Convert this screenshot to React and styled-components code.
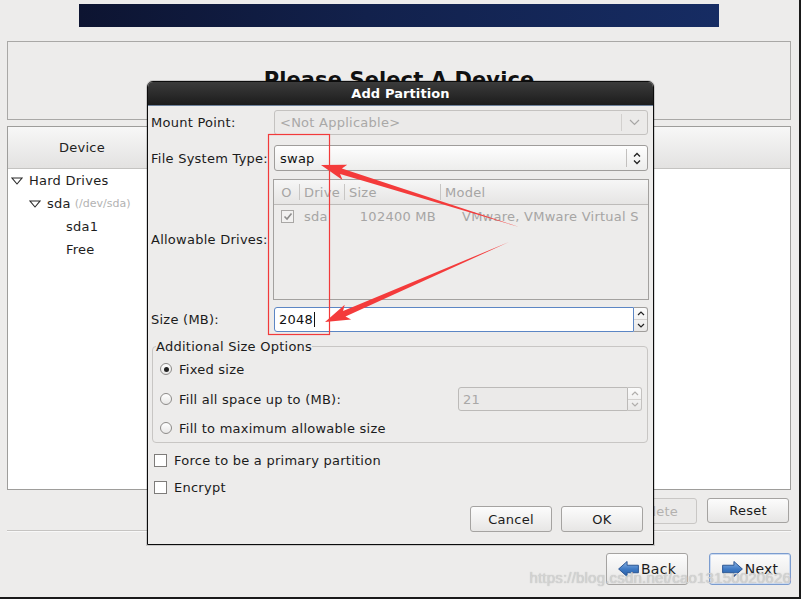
import React from "react";
import styled, { createGlobalStyle } from "styled-components";

const GlobalStyle = createGlobalStyle`
  html, body {
    margin: 0;
    padding: 0;
    background: #edeceb;
  }
  body {
    font-family: "DejaVu Sans", "Liberation Sans", sans-serif;
    font-size: 13px;
    letter-spacing: 0.25px;
    color: #1b1b1b;
  }
  * {
    box-sizing: border-box;
  }
`;

// ---------- background installer screen ----------

const Screen = styled.div`
  position: relative;
  width: 801px;
  height: 599px;
  overflow: hidden;
  background: #edeceb;
  border-right: 2px solid #1a1a1a;
  border-bottom: 2px solid #1a1a1a;
  padding: 4px 8px 0 7px;
  display: flex;
  flex-direction: column;
`;

const Banner = styled.div`
  margin-left: 72px;
  width: 640px;
  height: 23px;
  background: linear-gradient(90deg, #0d1431 0%, #12214c 45%, #162c63 100%);
`;

const HeaderPanel = styled.div`
  margin-top: 14px;
  height: 79px;
  border: 1px solid #a9a8a6;
  display: flex;
  align-items: center;
  justify-content: center;
  padding-bottom: 2px;
`;

const PageTitle = styled.h1`
  margin: 0;
  font-size: 21px;
  font-weight: 700;
  letter-spacing: 0.1px;
  color: #111;
`;

const DevicePanel = styled.div`
  margin-top: 6px;
  height: 364px;
  border: 1px solid #9e9d9b;
  background: #fff;
  display: flex;
  flex-direction: column;
`;

const ColumnHeader = styled.div`
  height: 42px;
  flex: none;
  display: flex;
  background: linear-gradient(#f7f7f7, #e3e2e1);
  border-bottom: 1px solid #c4c3c1;
`;

const ColumnTitle = styled.div`
  width: 148px;
  display: flex;
  align-items: center;
  justify-content: center;
  color: #222;
`;

const TreeList = styled.div`
  display: flex;
  flex-direction: column;
`;

const TreeRow = styled.div`
  height: 23px;
  display: flex;
  align-items: center;
  gap: 6px;
  padding-left: ${(p) => p.$indent}px;
  color: #1d1d1d;
`;

const TreeNote = styled.span`
  font-size: 11px;
  letter-spacing: 0;
  color: #b2b2b2;
  margin-left: -2px;
`;

const ActionRow = styled.div`
  margin-top: 8px;
  height: 25px;
  display: flex;
  justify-content: flex-end;
  gap: 10px;
  padding-right: 2px;
`;

const Separator = styled.div`
  margin-top: 7px;
  height: 2px;
  border-top: 1px solid #c6c4c2;
  border-bottom: 1px solid #f8f8f8;
`;

const NavRow = styled.div`
  margin-top: 21px;
  height: 32px;
  display: flex;
  justify-content: flex-end;
  gap: 21px;
`;

const Button = styled.button`
  width: 82px;
  height: ${(p) => p.$h || 26}px;
  padding: 0;
  display: flex;
  align-items: center;
  justify-content: center;
  gap: 2px;
  font-family: inherit;
  letter-spacing: inherit;
  font-size: ${(p) => p.$size || 13}px;
  color: ${(p) => (p.disabled ? "#b3b1af" : "#1b1b1b")};
  background: ${(p) =>
    p.disabled ? "#ebeae9" : "linear-gradient(#fcfcfc, #e7e6e5)"};
  border: 1px solid
    ${(p) => (p.$focus ? "#7b9ccf" : p.disabled ? "#c9c7c5" : "#a5a3a1")};
  box-shadow: ${(p) => (p.$focus ? "inset 0 0 0 1px #cddbf0" : "none")};
  border-radius: 3px;
`;

// ---------- dialog ----------

const Dialog = styled.div`
  position: absolute;
  left: 147px;
  top: 81px;
  width: 507px;
  height: 464px;
  display: flex;
  flex-direction: column;
  border: 1px solid #0c0c0c;
  border-radius: 6px 6px 0 0;
  background: #edeceb;
  overflow: hidden;
  box-shadow: 0 0 0 1px rgba(0, 0, 0, 0.15);
`;

const TitleBar = styled.div`
  height: 24px;
  flex: none;
  display: flex;
  align-items: center;
  justify-content: center;
  background: linear-gradient(#3b3b3b, #1c1c1c);
  border-bottom: 1px solid #6d819b;
  color: #fff;
  font-weight: 700;
  font-size: 13px;
  letter-spacing: 0.1px;
`;

const DialogBody = styled.div`
  flex: 1;
  display: flex;
  flex-direction: column;
  padding: 4px 5px 0 3px;
`;

const FormRow = styled.div`
  display: grid;
  grid-template-columns: 123px 1fr;
  align-items: center;
  margin-top: ${(p) => p.$mt || 0}px;
`;

const Label = styled.span`
  color: #1b1b1b;
`;

const Combo = styled.div`
  height: ${(p) => p.$h}px;
  display: flex;
  align-items: center;
  border: 1px solid ${(p) => (p.$disabled ? "#c4c2c0" : "#9f9d9b")};
  border-radius: 3px;
  background: ${(p) =>
    p.$disabled ? "#ebeae9" : "linear-gradient(#fefefe, #ededec)"};
  color: ${(p) => (p.$disabled ? "#a9a8a7" : "#111")};
`;

const ComboText = styled.span`
  flex: 1;
  padding-left: 5px;
`;

const ComboButton = styled.span`
  width: ${(p) => p.$w}px;
  align-self: stretch;
  display: flex;
  align-items: center;
  justify-content: center;
  margin: 3px 0;
  border-left: 1px solid ${(p) => (p.$disabled ? "#d2d0ce" : "#c2c0be")};
  color: ${(p) => (p.$disabled ? "#a8a7a6" : "#222")};
`;

const DriveTable = styled.div`
  height: 121px;
  margin-left: -1px;
  margin-right: -1px;
  border: 1px solid #a3a19f;
  background: #edeceb;
  color: #a6a5a4;
`;

const DriveGrid = styled.div`
  display: grid;
  grid-template-columns: 25px 45px 96px 1fr;
  align-items: center;
  height: ${(p) => p.$h}px;
  background: ${(p) => p.$bg || "transparent"};
  border-bottom: ${(p) => (p.$line ? "1px solid #bdbbb9" : "none")};
`;

const HeadCell = styled.span`
  height: 16px;
  display: flex;
  align-items: center;
  justify-content: ${(p) => p.$align || "flex-start"};
  padding-left: ${(p) => p.$pl || 0}px;
  border-left: ${(p) => (p.$sep ? "1px solid #c8c6c4" : "none")};
  white-space: nowrap;
  overflow: hidden;
`;

const Cell = styled.span`
  display: flex;
  justify-content: ${(p) => p.$align || "flex-start"};
  padding: 0 ${(p) => p.$pr || 0}px 0 ${(p) => p.$pl || 0}px;
  white-space: nowrap;
  overflow: hidden;
`;

const SpinBox = styled.div`
  height: ${(p) => p.$h}px;
  width: ${(p) => (p.$w ? `${p.$w}px` : "auto")};
  margin-right: ${(p) => p.$mr || 0}px;
  display: flex;
`;

const SpinField = styled.div`
  flex: 1;
  display: flex;
  align-items: center;
  padding-left: 4px;
  border: 1px solid ${(p) => (p.$focus ? "#5c86c4" : "#bcbab8")};
  border-radius: 3px 0 0 3px;
  background: ${(p) => (p.$disabled ? "#ebeae9" : "#fff")};
  color: ${(p) => (p.$disabled ? "#a9a8a7" : "#111")};
`;

const Caret = styled.span`
  width: 1px;
  height: 15px;
  margin-left: 1px;
  background: #111;
`;

const SpinButtons = styled.div`
  width: 14px;
  display: flex;
  flex-direction: column;
  border: 1px solid ${(p) => (p.$disabled ? "#c4c2c0" : "#a09e9c")};
  border-left: none;
  border-radius: 0 3px 3px 0;
  background: linear-gradient(#fbfbfb, #e9e8e7);
  color: ${(p) => (p.$disabled ? "#b0aeac" : "#222")};
`;

const SpinHalf = styled.span`
  flex: 1;
  display: flex;
  align-items: center;
  justify-content: center;
  & + & {
    border-top: 1px solid #d3d1cf;
  }
`;

const OptionsFrame = styled.fieldset`
  margin: 7px 0 0 1px;
  padding: 0 0 0 3px;
  border: 1px solid #c8c6c4;
  border-radius: 4px;
  min-inline-size: 0;
`;

const Legend = styled.legend`
  padding: 0;
  margin-left: 0;
  line-height: 15px;
  color: #1b1b1b;
`;

const OptionRow = styled.div`
  height: ${(p) => p.$h}px;
  display: flex;
  align-items: center;
  padding-left: 4px;
  gap: 7px;
`;

const Radio = styled.span`
  width: 12px;
  height: 12px;
  flex: none;
  border-radius: 50%;
  border: 1px solid #8d8b89;
  background: linear-gradient(#ffffff, #e8e7e6);
  display: flex;
  align-items: center;
  justify-content: center;
  &::after {
    content: "";
    width: 5px;
    height: 5px;
    border-radius: 50%;
    background: ${(p) => (p.$on ? "#222" : "transparent")};
  }
`;

const OptionText = styled.span`
  flex: 1;
`;

const CheckRow = styled.div`
  height: 27px;
  display: flex;
  align-items: center;
  gap: 7px;
  padding-left: 3px;
  margin-top: ${(p) => p.$mt || 0}px;
`;

const Check = styled.span`
  width: 13px;
  height: 13px;
  flex: none;
  display: flex;
  align-items: center;
  justify-content: center;
  border: 1px solid ${(p) => (p.$disabled ? "#a9a7a5" : "#7e7c7a")};
  background: ${(p) => (p.$disabled ? "#f2f1f0" : "#fff")};
  color: #8e8d8c;
`;

const ButtonRow = styled.div`
  margin-top: 5px;
  display: flex;
  justify-content: flex-end;
  gap: 9px;
  padding-right: 5px;
`;

// ---------- overlays ----------

const Annotations = styled.svg`
  position: absolute;
  left: 0;
  top: 0;
  pointer-events: none;
`;

const Watermark = styled.div`
  position: absolute;
  right: 8px;
  bottom: 11px;
  font-family: "Liberation Sans", Arial, sans-serif;
  font-size: 15px;
  color: rgba(214, 214, 214, 0.92);
  text-shadow: 0 0 1px rgba(150, 150, 150, 0.7);
  letter-spacing: 0.2px;
`;

// ---------- drawings ----------

const ChevronDown = () => (
  <svg width="11" height="7" viewBox="0 0 11 7">
    <path d="M1 1 L5.5 5.5 L10 1" fill="none" stroke="currentColor" strokeWidth="1.2" />
  </svg>
);

const UpDown = () => (
  <svg width="8" height="13" viewBox="0 0 8 13">
    <path d="M1 4.5 L4 1.5 L7 4.5 M1 8.5 L4 11.5 L7 8.5" fill="none" stroke="currentColor" strokeWidth="1.3" />
  </svg>
);

const SmallChevron = ({ up }) => (
  <svg width="8" height="5" viewBox="0 0 8 5">
    <path d={up ? "M1 4 L4 1 L7 4" : "M1 1 L4 4 L7 1"} fill="none" stroke="currentColor" strokeWidth="1.2" />
  </svg>
);

const Expander = () => (
  <svg width="12" height="8" viewBox="0 0 12 8">
    <polygon points="1,1 11,1 6,7" fill="none" stroke="#2a2a2a" strokeWidth="1.1" />
  </svg>
);

const Tick = () => (
  <svg width="10" height="9" viewBox="0 0 10 9">
    <path d="M1.5 4.5 L4 7 L8.5 1.5" fill="none" stroke="currentColor" strokeWidth="1.6" />
  </svg>
);

const NavArrow = ({ left }) => (
  <svg width="21" height="16" viewBox="0 0 22 17">
    <defs>
      <linearGradient id={left ? "gb" : "gn"} x1="0" y1="0" x2="0" y2="1">
        <stop offset="0" stopColor="#8fb6e6" />
        <stop offset="0.5" stopColor="#3f7ac4" />
        <stop offset="1" stopColor="#2a5ea6" />
      </linearGradient>
    </defs>
    <polygon
      points={
        left
          ? "0.5,8.5 9.5,0.5 9.5,4.5 21.5,4.5 21.5,12.5 9.5,12.5 9.5,16.5"
          : "21.5,8.5 12.5,0.5 12.5,4.5 0.5,4.5 0.5,12.5 12.5,12.5 12.5,16.5"
      }
      fill={`url(#${left ? "gb" : "gn"})`}
      stroke="#24508f"
      strokeWidth="1"
      strokeLinejoin="round"
    />
  </svg>
);

function arrowPoints(tip, tail, head = 21, wing = 8, shaft = 3) {
  const dx = tail[0] - tip[0];
  const dy = tail[1] - tip[1];
  const len = Math.hypot(dx, dy);
  const ux = dx / len;
  const uy = dy / len;
  const nx = -uy;
  const ny = ux;
  const bx = tip[0] + ux * head;
  const by = tip[1] + uy * head;
  const notch = 4;
  const pts = [
    tip,
    [bx + ux * notch + nx * wing, by + uy * notch + ny * wing],
    [bx + nx * shaft, by + ny * shaft],
    tail,
    [bx - nx * shaft, by - ny * shaft],
    [bx + ux * notch - nx * wing, by + uy * notch - ny * wing],
  ];
  return pts.map((p) => p.map((v) => v.toFixed(1)).join(",")).join(" ");
}

const drives = [
  { drive: "sda", size: "102400 MB", model: "VMware, VMware Virtual S" },
];

export default function App() {
  return (
    <>
      <GlobalStyle />
      <Screen>
        <Banner />
        <HeaderPanel>
          <PageTitle>Please Select A Device</PageTitle>
        </HeaderPanel>
        <DevicePanel>
          <ColumnHeader>
            <ColumnTitle>Device</ColumnTitle>
          </ColumnHeader>
          <TreeList>
            <TreeRow $indent={3}>
              <Expander />
              Hard Drives
            </TreeRow>
            <TreeRow $indent={21}>
              <Expander />
              sda <TreeNote>(/dev/sda)</TreeNote>
            </TreeRow>
            <TreeRow $indent={58}>sda1</TreeRow>
            <TreeRow $indent={58}>Free</TreeRow>
          </TreeList>
        </DevicePanel>
        <ActionRow>
          <Button disabled>Delete</Button>
          <Button $h={25}>Reset</Button>
        </ActionRow>
        <Separator />
        <NavRow>
          <Button $h={32} $size={14}>
            <NavArrow left />
            Back
          </Button>
          <Button $h={32} $size={14} $focus>
            <NavArrow />
            Next
          </Button>
        </NavRow>

        <Dialog>
          <TitleBar>Add Partition</TitleBar>
          <DialogBody>
            <FormRow>
              <Label>Mount Point:</Label>
              <Combo $h={25} $disabled>
                <ComboText>&lt;Not Applicable&gt;</ComboText>
                <ComboButton $w={26} $disabled>
                  <ChevronDown />
                </ComboButton>
              </Combo>
            </FormRow>
            <FormRow $mt={10}>
              <Label>File System Type:</Label>
              <Combo $h={26}>
                <ComboText>swap</ComboText>
                <ComboButton $w={21}>
                  <UpDown />
                </ComboButton>
              </Combo>
            </FormRow>
            <FormRow $mt={8}>
              <Label>Allowable Drives:</Label>
              <DriveTable>
                <DriveGrid $h={25} $bg="linear-gradient(#f6f6f6, #e6e5e4)" $line>
                  <HeadCell $align="center">O</HeadCell>
                  <HeadCell $sep $pl={4}>Drive</HeadCell>
                  <HeadCell $sep $pl={4}>Size</HeadCell>
                  <HeadCell $sep $pl={4}>Model</HeadCell>
                </DriveGrid>
                {drives.map((d) => (
                  <DriveGrid $h={23} key={d.drive}>
                    <Cell $align="flex-end" $pr={5}>
                      <Check $disabled>
                        <Tick />
                      </Check>
                    </Cell>
                    <Cell $pl={5}>{d.drive}</Cell>
                    <Cell $align="flex-end" $pr={4}>{d.size}</Cell>
                    <Cell $pl={22}>{d.model}</Cell>
                  </DriveGrid>
                ))}
              </DriveTable>
            </FormRow>
            <FormRow $mt={7}>
              <Label>Size (MB):</Label>
              <SpinBox $h={25}>
                <SpinField $focus>
                  2048
                  <Caret />
                </SpinField>
                <SpinButtons>
                  <SpinHalf>
                    <SmallChevron up />
                  </SpinHalf>
                  <SpinHalf>
                    <SmallChevron />
                  </SpinHalf>
                </SpinButtons>
              </SpinBox>
            </FormRow>

            <OptionsFrame>
              <Legend>Additional Size Options</Legend>
              <OptionRow $h={30}>
                <Radio $on />
                <OptionText>Fixed size</OptionText>
              </OptionRow>
              <OptionRow $h={30}>
                <Radio />
                <OptionText>Fill all space up to (MB):</OptionText>
                <SpinBox $h={24} $w={184} $mr={5}>
                  <SpinField $disabled>21</SpinField>
                  <SpinButtons $disabled>
                    <SpinHalf>
                      <SmallChevron up />
                    </SpinHalf>
                    <SpinHalf>
                      <SmallChevron />
                    </SpinHalf>
                  </SpinButtons>
                </SpinBox>
              </OptionRow>
              <OptionRow $h={28}>
                <Radio />
                <OptionText>Fill to maximum allowable size</OptionText>
              </OptionRow>
            </OptionsFrame>

            <CheckRow $mt={4}>
              <Check />
              Force to be a primary partition
            </CheckRow>
            <CheckRow>
              <Check />
              Encrypt
            </CheckRow>

            <ButtonRow>
              <Button>Cancel</Button>
              <Button>OK</Button>
            </ButtonRow>
          </DialogBody>
        </Dialog>

        <Annotations width="801" height="599" viewBox="0 0 801 599">
          <rect x="268.5" y="134.5" width="61" height="200" fill="none" stroke="#f23a3a" strokeWidth="1.2" />
          <polygon points={arrowPoints([321, 165], [519, 227])} fill="#f43b3b" />
          <polygon points={arrowPoints([325, 322], [509, 242])} fill="#f43b3b" />
        </Annotations>

        <Watermark>https://blog.csdn.net/cao13150020626</Watermark>
      </Screen>
    </>
  );
}
